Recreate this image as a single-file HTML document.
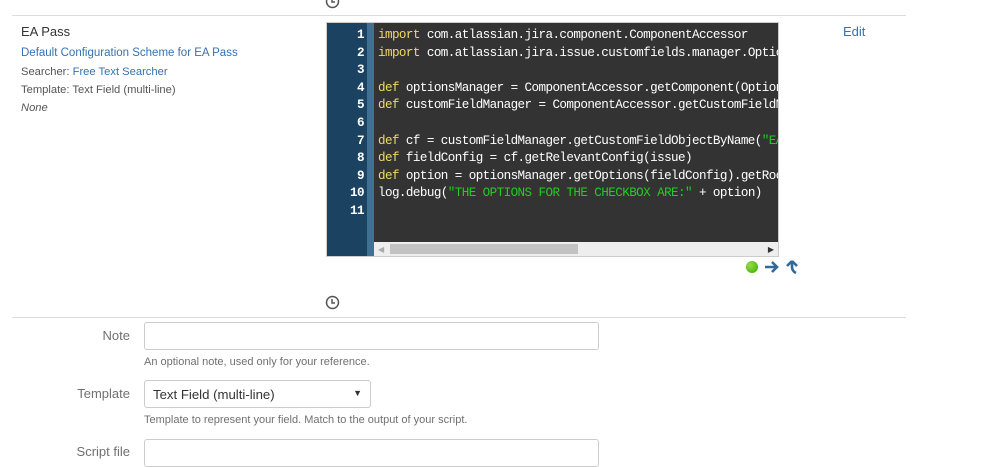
<!DOCTYPE html>
<html><head><meta charset="utf-8"><style>
body{margin:0;width:999px;height:452px;background:#fff;font-family:"Liberation Sans",sans-serif;position:relative;overflow:hidden;color:#333}
.a{position:absolute}
.hr{position:absolute;left:12px;width:894px;height:1px;background:#ddd}
.link{color:#3572b0}
.code{position:absolute;left:326px;top:22px;width:453px;height:235px;background:#333;border:1px solid #ccc;box-sizing:border-box;overflow:hidden}
.gut{position:absolute;left:0;top:0;width:40px;height:100%;background:#1b4260}
.gut2{position:absolute;left:40px;top:0;width:7px;height:100%;background:#41718f}
.ln,.cl{position:absolute;top:4px;font-family:"Liberation Mono",monospace;font-size:12.6px;letter-spacing:-0.58px;line-height:17.6px;white-space:pre}
.ln{left:0;width:37px;text-align:right;color:#fff;font-weight:bold}
.cl{left:51px;color:#fff}
.k{color:#f1d96b}.s{color:#22cc22}
.sb{position:absolute;left:47px;bottom:0;right:0;height:14px;background:#eee}
.inp{position:absolute;border:1px solid #ccc;border-radius:3px;background:#fff;box-sizing:border-box}
.lab{position:absolute;font-size:13px;color:#707070;text-align:right;width:118px;left:12px}
.help{position:absolute;left:144px;font-size:11px;color:#707070;white-space:nowrap}
</style></head><body>
<svg class="a" style="left:325px;top:-6px" width="15" height="15" viewBox="0 0 15 15"><circle cx="7.5" cy="7.5" r="6" fill="none" stroke="#555" stroke-width="1.5"/><path d="M7 4v4h3" fill="none" stroke="#555" stroke-width="1.5"/></svg>
<div class="hr" style="top:15px"></div>
<div class="a" style="left:21px;top:24px;font-size:13px;color:#333">EA Pass</div>
<div class="a link" style="left:21px;top:47px;font-size:11.5px">Default Configuration Scheme for EA Pass</div>
<div class="a" style="left:21px;top:66px;font-size:11.2px;color:#555">Searcher: <span class="link">Free Text Searcher</span></div>
<div class="a" style="left:21px;top:84px;font-size:11.2px;color:#555">Template: Text Field (multi-line)</div>
<div class="a" style="left:21px;top:102px;font-size:11.2px;color:#555;font-style:italic">None</div>
<div class="a link" style="left:843px;top:24px;font-size:13px">Edit</div>
<div class="code"><div class="gut"></div><div class="gut2"></div>
<div class="ln">1
2
3
4
5
6
7
8
9
10
11</div>
<div class="cl"><span class="k">import</span> com.atlassian.jira.component.ComponentAccessor
<span class="k">import</span> com.atlassian.jira.issue.customfields.manager.OptionsManager

<span class="k">def</span> optionsManager = ComponentAccessor.getComponent(OptionsManager)
<span class="k">def</span> customFieldManager = ComponentAccessor.getCustomFieldManager()

<span class="k">def</span> cf = customFieldManager.getCustomFieldObjectByName(<span class="s">"EA Pass"</span>)
<span class="k">def</span> fieldConfig = cf.getRelevantConfig(issue)
<span class="k">def</span> option = optionsManager.getOptions(fieldConfig).getRootOptions()
log.debug(<span class="s">"THE OPTIONS FOR THE CHECKBOX ARE:"</span> + option)
</div>
<div class="sb"><div class="a" style="left:16px;top:2px;width:188px;height:10px;background:#c3c3c3"></div><div class="a" style="right:4px;top:3px;font-size:8px;color:#333">▶</div><div class="a" style="left:4px;top:3px;font-size:8px;color:#aaa">◀</div></div>
</div>
<div class="a" style="left:746px;top:261px;width:12px;height:12px;border-radius:50%;background:radial-gradient(circle at 35% 35%,#9d4,#3a0)"></div>
<svg class="a" style="left:764px;top:260px" width="16" height="14" viewBox="0 0 16 14"><path d="M1 7h11M8 2l5 5-5 5" fill="none" stroke="#2f6a9a" stroke-width="2.6"/></svg>
<svg class="a" style="left:785px;top:259px" width="14" height="16" viewBox="0 0 14 16"><path d="M7 2L2 7M7 2l5 5M7 2v6c0 3 2 5 4 6" fill="none" stroke="#2f6a9a" stroke-width="2.6"/></svg>
<svg class="a" style="left:325px;top:295px" width="15" height="15" viewBox="0 0 15 15"><circle cx="7.5" cy="7.5" r="6" fill="none" stroke="#555" stroke-width="1.5"/><path d="M7 4v4h3" fill="none" stroke="#555" stroke-width="1.5"/></svg>
<div class="hr" style="top:317px"></div>
<div class="lab" style="top:328px">Note</div>
<div class="inp" style="left:144px;top:322px;width:455px;height:28px"></div>
<div class="help" style="top:356px">An optional note, used only for your reference.</div>
<div class="lab" style="top:386px">Template</div>
<div class="inp" style="left:144px;top:380px;width:227px;height:28px;font-size:13.2px;color:#333;padding:6px 8px">Text Field (multi-line)<span class="a" style="right:8px;top:7px;font-size:9px">▼</span></div>
<div class="help" style="top:414px">Template to represent your field. Match to the output of your script.</div>
<div class="lab" style="top:444px">Script file</div>
<div class="inp" style="left:144px;top:439px;width:455px;height:28px"></div>
</body></html>
